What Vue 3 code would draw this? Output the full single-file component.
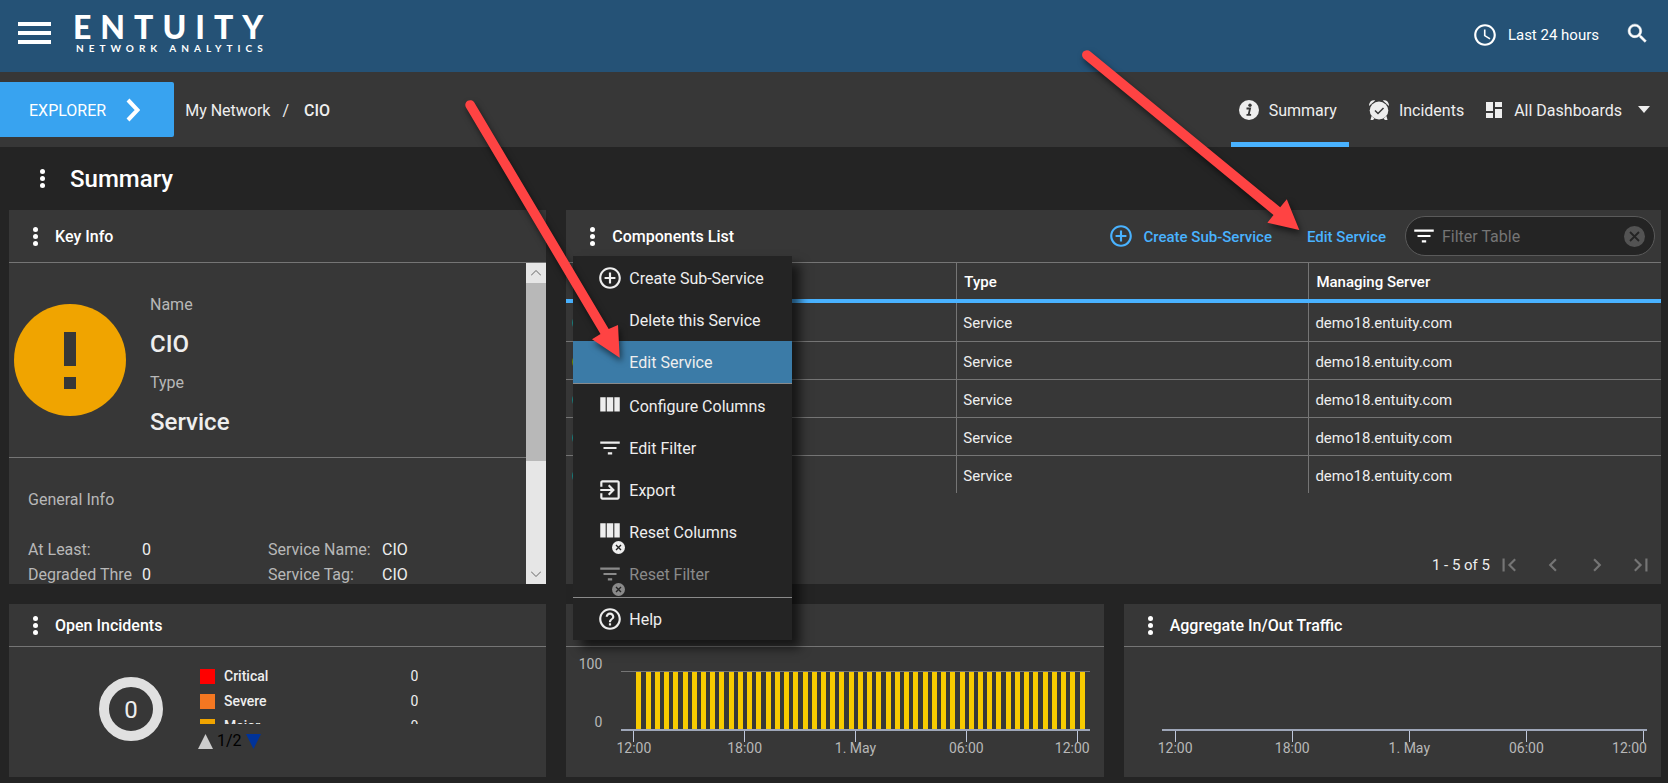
<script setup>
import { ref } from 'vue'

const filterText = ref('')

const rows = [
  { status: 'teal', type: 'Service', server: 'demo18.entuity.com' },
  { status: 'olive', type: 'Service', server: 'demo18.entuity.com' },
  { status: 'teal', type: 'Service', server: 'demo18.entuity.com' },
  { status: 'teal', type: 'Service', server: 'demo18.entuity.com' },
  { status: 'teal', type: 'Service', server: 'demo18.entuity.com' },
]

const menuGroups = [
  [
    { label: 'Create Sub-Service', icon: 'plus' },
    { label: 'Delete this Service' },
    { label: 'Edit Service', active: true },
  ],
  [
    { label: 'Configure Columns', icon: 'columns' },
    { label: 'Edit Filter', icon: 'filter' },
    { label: 'Export', icon: 'export' },
    { label: 'Reset Columns', icon: 'columns', badge: true },
    { label: 'Reset Filter', icon: 'filter', badge: true, disabled: true },
  ],
  [{ label: 'Help', icon: 'help' }],
]

const icons = {
  plus: 'M13 7h-2v4H7v2h4v4h2v-4h4v-2h-4V7zm-1-5C6.480 2 2 6.480 2 12s4.480 10 10 10 10-4.480 10-10S17.520 2 12 2zm0 18c-4.410 0-8-3.590-8-8s3.590-8 8-8 8 3.590 8 8-3.590 8-8 8z',
  columns: 'M3 4h5v13H3zM9 4h6v13H9zM16 4h5v13h-5z',
  filter: 'M10 18h4v-2h-4v2zM3 6v2h18V6H3zm3 7h12v-2H6v2z',
  export: 'M10.090 15.590L11.500 17l5-5-5-5-1.410 1.410L12.670 11H3v2h9.670l-2.580 2.590zM19 3H5c-1.110 0-2 .9-2 2v4h2V5h14v14H5v-4H3v4c0 1.100.89 2 2 2h14c1.100 0 2-.9 2-2V5c0-1.100-.9-2-2-2z',
  help: 'M11 18h2v-2h-2v2zm1-16C6.480 2 2 6.480 2 12s4.480 10 10 10 10-4.480 10-10S17.520 2 12 2zm0 18c-4.410 0-8-3.590-8-8s3.590-8 8-8 8 3.590 8 8-3.590 8-8 8zm0-14c-2.210 0-4 1.790-4 4h2c0-1.100.9-2 2-2s2 .9 2 2c0 2-3 1.750-3 5h2c0-2.250 3-2.500 3-5 0-2.210-1.790-4-4-4z',
}

const pagers = [
  { label: 'First page', d: 'M18.410 16.590L13.820 12l4.590-4.590L17 6l-6 6 6 6zM6 6h2v12H6z' },
  { label: 'Previous page', d: 'M15.410 7.410L14 6l-6 6 6 6 1.410-1.410L10.830 12z' },
  { label: 'Next page', d: 'M10 6L8.590 7.410 13.170 12l-4.580 4.590L10 18l6-6z' },
  { label: 'Last page', d: 'M5.590 7.410L10.180 12l-4.590 4.590L7 18l6-6-6-6zM16 6h2v12h-2z' },
]

const severities = [
  { name: 'Critical', cls: 'critical', count: 0 },
  { name: 'Severe', cls: 'severe', count: 0 },
  { name: 'Major', cls: 'major', count: 0 },
]

const times = ['12:00', '18:00', '1. May', '06:00', '12:00']
const samples = Array.from({ length: 49 }, () => 100)
</script>

<template>
  <div class="page">
    <header class="topbar">
      <button class="burger" aria-label="Menu"><i></i><i></i><i></i></button>
      <div class="logo">
        <span class="logo-name">ENTUITY</span>
        <span class="logo-sub">NETWORK ANALYTICS</span>
      </div>
      <button class="range">
        <svg width="26" height="26" viewBox="0 0 24 24"><path fill="currentColor" d="M11.990 2C6.470 2 2 6.480 2 12s4.470 10 9.990 10C17.520 22 22 17.520 22 12S17.520 2 11.990 2zM12 20c-4.420 0-8-3.580-8-8s3.580-8 8-8 8 3.580 8 8-3.580 8-8 8zm.5-13H11v6l5.250 3.150.75-1.230-4.500-2.670z" /></svg>
        Last 24 hours
      </button>
      <button class="search" aria-label="Search">
        <svg width="25" height="25" viewBox="0 0 24 24"><path fill="currentColor" stroke="currentColor" stroke-width=".5" d="M15.500 14h-.79l-.28-.27C15.410 12.590 16 11.110 16 9.500 16 5.910 13.090 3 9.500 3S3 5.910 3 9.500 5.910 16 9.500 16c1.610 0 3.090-.59 4.230-1.570l.27.28v.79l5 4.990L20.490 19l-4.990-5zm-6 0C7.010 14 5 11.990 5 9.500S7.010 5 9.500 5 14 7.010 14 9.500 11.990 14 9.500 14z" /></svg>
      </button>
    </header>

    <div class="subbar">
      <button class="explorer">
        <span class="label">EXPLORER</span>
        <svg width="14" height="24" viewBox="0 0 14 24"><path d="M2 2l9.500 10L2 22" fill="none" stroke="currentColor" stroke-width="4" /></svg>
      </button>
      <nav class="crumbs label" aria-label="Breadcrumb">
        <a href="#">My Network</a><span>/</span><strong>CIO</strong>
      </nav>
      <nav class="tabs" aria-label="Views">
        <a href="#" class="tab current">
          <svg width="20" height="20" viewBox="0 0 20 20"><circle cx="10" cy="10" r="10" fill="#eee" /><circle cx="11" cy="5.200" r="1.700" fill="#373737" /><path d="M7.500 8.500h3.600l-1.500 6.200h1.600M7.500 14.900h4.600" fill="none" stroke="#373737" stroke-width="1.800" /></svg>
          <span class="label">Summary</span>
        </a>
        <a href="#" class="tab incidents">
          <svg width="20" height="20" viewBox="0 0 20 20"><g fill="#eee"><ellipse cx="10" cy="10.500" rx="9.300" ry="9" /><path d="M0 6C-.3 2 3 -.7 6.200.4zM20 6C20.300 2 17-.7 13.800.4zM2.500 16l3 2.500-1.500 1.500H1.500zM17.500 16l-3 2.500 1.500 1.500h2.500z" /></g><path d="M6 10.500l3 3 5.500-5.500" fill="none" stroke="#373737" stroke-width="1.500" /></svg>
          <span class="label">Incidents</span>
        </a>
        <button class="tab dashboards">
          <svg width="16" height="16" viewBox="0 0 16 16"><path fill="#eee" d="M0 0h7v9H0zM0 11h7v5H0zM9 0h7v5H9zM9 7h7v9H9z" /></svg>
          <span class="label">All Dashboards</span>
          <svg class="caret" width="12" height="7" viewBox="0 0 12 7"><path fill="#eee" d="M0 0h12L6 7z" /></svg>
        </button>
      </nav>
    </div>

    <div class="heading">
      <button class="dots" aria-label="Dashboard options"><i></i><i></i><i></i></button>
      <h1>Summary</h1>
    </div>

    <main class="board">
      <section class="panel keyinfo">
        <div class="panel-head tall">
          <button class="dots" aria-label="Key Info options"><i></i><i></i><i></i></button>
          <h2 class="label">Key Info</h2>
        </div>
        <div class="scroller">
          <div class="scroll-content">
            <div class="identity">
              <svg width="112" height="112" viewBox="0 0 112 112"><circle cx="56" cy="56" r="56" fill="#f0a400" /><path fill="#373737" d="M50 28h12v34H50zM50 73h12v12H50z" /></svg>
              <dl>
                <dt>Name</dt><dd>CIO</dd>
                <dt>Type</dt><dd>Service</dd>
              </dl>
            </div>
            <div class="general">
              <h3>General Info</h3>
              <dl>
                <dt>At Least:</dt><dd>0</dd><dt>Service Name:</dt><dd>CIO</dd>
                <dt>Degraded Thre</dt><dd>0</dd><dt>Service Tag:</dt><dd>CIO</dd>
              </dl>
            </div>
          </div>
          <div class="scrollbar" aria-hidden="true">
            <span class="arrow"><svg width="10" height="6" viewBox="0 0 10 6"><path d="M0 5.500l5-5 5 5" fill="none" stroke="#666" /></svg></span>
            <span class="thumb"></span>
            <span class="track"></span>
            <span class="arrow"><svg width="10" height="6" viewBox="0 0 10 6"><path d="M0 .5l5 5 5-5" fill="none" stroke="#666" /></svg></span>
          </div>
        </div>
      </section>

      <section class="panel components">
        <div class="panel-head tall">
          <button class="dots" aria-label="Components List options" aria-expanded="true"><i></i><i></i><i></i></button>
          <h2 class="label">Components List</h2>
          <button class="action create">
            <svg width="26" height="26" viewBox="0 0 24 24"><path fill="currentColor" :d="icons.plus" /></svg>
            <span class="label">Create Sub-Service</span>
          </button>
          <button class="action label">Edit Service</button>
          <div class="filter">
            <svg width="26" height="26" viewBox="0 0 24 24"><path fill="#fff" :d="icons.filter" /></svg>
            <input v-model="filterText" class="label" type="text" placeholder="Filter Table" aria-label="Filter Table" />
            <button aria-label="Clear filter">
              <svg width="21" height="21" viewBox="0 0 21 21"><circle cx="10.500" cy="10.500" r="10.500" fill="#535353" /><path d="M6 6l9 9M15 6l-9 9" stroke="#242424" stroke-width="1.800" /></svg>
            </button>
          </div>
          <div class="menu" role="menu">
            <div v-for="(group, g) in menuGroups" :key="g" class="menu-group">
              <button v-for="item in group" :key="item.label" role="menuitem" :disabled="item.disabled" :class="{ active: item.active }">
                <span class="menu-icon">
                  <svg v-if="item.icon" width="26" height="26" viewBox="0 0 24 24"><path fill="currentColor" :d="icons[item.icon]" /></svg>
                  <svg v-if="item.badge" class="badge" width="13" height="13" viewBox="0 0 13 13"><circle cx="6.500" cy="6.500" r="6.500" fill="currentColor" /><path d="M4 4l5 5M9 4L4 9" stroke="#242424" stroke-width="1.400" /></svg>
                </span>
                <span class="label">{{ item.label }}</span>
              </button>
            </div>
          </div>
        </div>
        <table>
          <thead>
            <tr><th></th><th>Type</th><th>Managing Server</th></tr>
          </thead>
          <tbody>
            <tr v-for="(row, i) in rows" :key="i">
              <td><span class="status" :class="row.status"></span></td>
              <td>{{ row.type }}</td>
              <td>{{ row.server }}</td>
            </tr>
          </tbody>
        </table>
        <div class="pager">
          <span>1 - 5 of 5</span>
          <button v-for="p in pagers" :key="p.label" :aria-label="p.label" disabled>
            <svg width="26" height="26" viewBox="0 0 24 24"><path fill="currentColor" :d="p.d" /></svg>
          </button>
        </div>
      </section>

      <section class="panel incidents-panel">
        <div class="panel-head">
          <button class="dots" aria-label="Open Incidents options"><i></i><i></i><i></i></button>
          <h2 class="label">Open Incidents</h2>
        </div>
        <div class="incident-body">
          <div class="donut">0</div>
          <div class="legend">
            <ul>
              <li v-for="s in severities" :key="s.name">
                <i :class="s.cls"></i><b>{{ s.name }}</b><span>{{ s.count }}</span>
              </li>
            </ul>
            <div class="legend-nav">
              <button aria-label="Previous"><svg width="15" height="15" viewBox="0 0 15 15"><path fill="#ccc" d="M0 15L7.500 0 15 15z" /></svg></button>
              1/2
              <button aria-label="Next"><svg width="15" height="15" viewBox="0 0 15 15"><path fill="#039" d="M0 0h15L7.500 15z" /></svg></button>
            </div>
          </div>
        </div>
      </section>

      <section class="panel">
        <div class="panel-head"></div>
        <div class="chart health">
          <div class="y-axis"><span>100</span><span>0</span></div>
          <div class="plot">
            <div class="bars"><i v-for="(s, i) in samples" :key="i" :style="{ height: s + '%' }"></i></div>
            <ul class="x-axis"><li v-for="(t, i) in times" :key="i"><span>{{ t }}</span></li></ul>
          </div>
        </div>
      </section>

      <section class="panel">
        <div class="panel-head">
          <button class="dots" aria-label="Aggregate In/Out Traffic options"><i></i><i></i><i></i></button>
          <h2 class="label">Aggregate In/Out Traffic</h2>
        </div>
        <div class="chart traffic">
          <div class="plot">
            <div class="bars"></div>
            <ul class="x-axis"><li v-for="(t, i) in times" :key="i"><span>{{ t }}</span></li></ul>
          </div>
        </div>
      </section>
    </main>

    <svg class="pointers" width="1320" height="380" viewBox="0 0 1320 380" aria-hidden="true">
      <g fill="#ff4343" stroke="none">
        <path d="M466 107.500A4.800 4.800 0 0 1 474.300 102.500L608.700 329 618 325 619.700 357.700 592 339.300 600.500 334z" />
        <path d="M1083.500 58.500A4.800 4.800 0 0 1 1090.300 51.500L1280.200 207.300 1286.800 199.300 1299.300 230 1267.400 222.700 1273.500 215z" />
      </g>
    </svg>
  </div>
</template>

<style>
body {
  margin: 0;
  background: #242424;
}
</style>

<style scoped>
.page {
  position: relative;
  display: flex;
  flex-direction: column;
  height: 100vh;
  min-height: 760px;
  box-sizing: border-box;
  overflow: hidden;
  background: #242424;
  color: #eee;
  font: 400 16px/24px Roboto, sans-serif;
}
button {
  margin: 0;
  padding: 0;
  border: 0;
  background: none;
  color: inherit;
  font: inherit;
}
svg { display: block; flex: none; }
a { color: inherit; text-decoration: none; }
h1, h2, h3, dl, dd, ul { margin: 0; padding: 0; }
ul { list-style: none; }
.label { padding-top: 2px; }

.topbar {
  display: flex;
  align-items: center;
  flex: none;
  height: 72px;
  box-sizing: border-box;
  padding: 0 18px 6px 18px;
  background: #255276;
  color: #fff;
}
.burger {
  display: flex;
  flex-direction: column;
  gap: 5px;
  width: 33px;
}
.burger i { height: 4px; background: #fff; }
.logo {
  display: flex;
  flex-direction: column;
  margin-left: 22px;
}
.logo-name { font: 900 32px/30px Lato, sans-serif; letter-spacing: 9px; }
.logo-sub { padding-left: 3px; font: 700 10px/12px Lato, sans-serif; letter-spacing: 5px; }
.range {
  display: flex;
  align-items: center;
  gap: 10px;
  margin-left: auto;
  font-size: 15px;
  padding-top: 4px;
}
.search { margin-left: 26px; }

.subbar {
  display: flex;
  align-items: center;
  flex: none;
  height: 75px;
  background: #373737;
}
.explorer {
  display: flex;
  align-items: center;
  gap: 20px;
  height: 55px;
  padding: 0 34px 0 29px;
  border-radius: 0 2px 2px 0;
  background: #38a3f0;
  color: #fff;
}
.crumbs { display: flex; gap: 12px; margin-left: 11px; }
.crumbs strong { margin-left: 3px; font-weight: 500; }
.tabs { display: flex; align-self: stretch; margin-left: auto; padding-right: 18px; }
.tab {
  display: flex;
  align-items: center;
  gap: 10px;
  box-sizing: border-box;
  border-top: 5px solid transparent;
  border-bottom: 5px solid transparent;
}
.current { padding: 0 12px 0 8px; border-bottom-color: #49b2ff; }
.incidents { padding-left: 20px; }
.dashboards { gap: 12px; padding-left: 22px; }
.caret { margin-left: 4px; }

.dots {
  display: flex;
  flex-direction: column;
  gap: 2px;
  width: 5px;
}
.dots i { width: 5px; height: 5px; border-radius: 50%; background: #fff; }

.heading {
  display: flex;
  align-items: center;
  gap: 25px;
  flex: none;
  height: 63px;
  padding-left: 40px;
}
h1 { color: #fff; font-size: 24px; font-weight: 500; }

.board {
  display: grid;
  flex: 1;
  grid-template-columns: repeat(3, minmax(0, 1fr));
  grid-template-rows: minmax(0, 374fr) minmax(0, 173fr);
  gap: 20px;
  min-height: 0;
  padding: 0 7px 6px 9px;
}
.panel {
  display: flex;
  flex-direction: column;
  min-width: 0;
  min-height: 0;
  background: #373737;
}
.panel-head {
  position: relative;
  display: flex;
  align-items: center;
  flex: none;
  height: 43px;
  box-sizing: border-box;
  padding-left: 24px;
  border-bottom: 1px solid #757575;
}
.tall { height: 53px; }
h2 { margin-left: 17px; color: #fff; font-size: 16px; font-weight: 500; }

.scroller { display: flex; flex: 1; min-height: 0; overflow: hidden; }
.scroll-content { flex: 1; color: #b8b8b8; }
.identity {
  display: flex;
  align-items: center;
  gap: 24px;
  height: 195px;
  box-sizing: border-box;
  padding-left: 5px;
  border-bottom: 1px solid #757575;
}
.identity dl { padding-top: 8px; }
.identity dd { margin: 13px 0; color: #eee; font-size: 24px; font-weight: 500; line-height: 28px; }
.identity dd:last-child { margin-bottom: 0; }
.general { padding: 30px 19px 0; }
h3 { font-size: 16px; font-weight: 400; }
.general dl {
  display: grid;
  grid-template-columns: 106px 118px 106px 1fr;
  column-gap: 8px;
  margin-top: 25px;
  line-height: 25px;
  white-space: nowrap;
}
.general dd { color: #eee; }
.scrollbar { display: flex; flex-direction: column; width: 20px; background: #e6e6e6; }
.arrow { display: flex; align-items: center; justify-content: center; height: 20px; }
.thumb { flex: 178; background: #b8b8b8; }
.track { flex: 103; }

.components { grid-column: span 2; }
.action { color: #49b2ff; font-size: 15px; font-weight: 500; }
.create { display: flex; align-items: center; gap: 10px; margin: 0 35px 0 auto; }
.filter {
  display: flex;
  align-items: center;
  gap: 5px;
  width: 250px;
  height: 40px;
  box-sizing: border-box;
  margin: 0 6px 0 19px;
  padding: 0 9px 0 5px;
  border: 1px solid #5a5a5a;
  border-radius: 20px;
  background: #242424;
}
.filter input {
  flex: 1;
  min-width: 0;
  padding-right: 0;
  padding-bottom: 0;
  padding-left: 0;
  border: 0;
  outline: 0;
  background: none;
  color: #eee;
  font: inherit;
}
.filter input::placeholder { color: #757575; opacity: 1; }

.menu {
  position: absolute;
  top: 46px;
  left: 7px;
  z-index: 2;
  width: 219px;
  background: #242424;
  box-shadow: 8px 8px 10px rgba(0, 0, 0, 0.6);
}
.menu-group { padding: 1px 0 2px; border-top: 1px solid #8a8a8a; }
.menu-group:first-child { padding: 1px 0 0; border-top: 0; }
.menu-group:last-child { padding: 0; }
.menu button {
  display: flex;
  align-items: center;
  gap: 6px;
  width: 100%;
  height: 42px;
  padding-left: 24px;
  color: #eee;
  white-space: nowrap;
}
.menu button.active { background: #3b7ba7; }
.menu button:disabled { color: #8a8a8a; }
.menu-icon { position: relative; width: 26px; height: 26px; }
.badge { position: absolute; top: 22px; left: 15px; }

table { width: 100%; border-collapse: collapse; table-layout: fixed; font-size: 15px; text-align: left; }
th, td { height: 35px; padding: 2px 0 0 6px; border-left: 1px solid #757575; }
th:first-child, td:first-child { width: 384px; border-left: 0; padding-left: 6px; }
th { height: 34px; padding-left: 7px; font-weight: 500; color: #fff; border-bottom: 4px solid #49b2ff; }
tbody tr:first-child td { height: 36px; }
tbody tr + tr td { border-top: 1px solid #757575; }
.status { display: block; width: 16px; height: 16px; border-radius: 50%; }
.teal { background: #17807e; }
.olive { background: #6c8a00; }
.pager {
  display: flex;
  align-items: center;
  justify-content: flex-end;
  gap: 18px;
  margin-top: auto;
  padding: 0 7px 6px 0;
  font-size: 15px;
}
.pager span { margin-right: -12px; }
.pager button { color: #757575; }

.incident-body { display: flex; align-items: center; flex: 1; min-height: 0; padding: 0 128px 7px 90px; }
.donut {
  width: 44px;
  height: 44px;
  border: 10px solid #e0e0e0;
  border-radius: 50%;
  font-size: 24px;
  line-height: 46px;
  text-align: center;
}
.legend { flex: 1; margin-left: 37px; }
.legend ul { height: 60px; overflow: hidden; }
.legend li { display: flex; align-items: center; gap: 9px; height: 25px; font-size: 14px; line-height: 25px; }
.legend li i { width: 15px; height: 15px; }
.legend b { flex: 1; font-weight: 500; }
.critical { background: #f00; }
.severe { background: #f47721; }
.major { background: #f0a400; }
.legend-nav { display: flex; align-items: center; gap: 4px; margin-left: -2px; padding-top: 5px; color: #000; }

.chart { display: flex; flex: 1; min-height: 0; color: #b8b8b8; font-size: 14px; line-height: 16px; }
.health { padding: 24px 14px 0 12px; }
.traffic { padding: 24px 14px 0 38px; }
.y-axis {
  display: flex;
  flex-direction: column;
  justify-content: space-between;
  width: 24px;
  height: 74px;
  margin: -15px 19px 0 0;
  text-align: right;
}
.plot { flex: 1; min-width: 0; }
.bars {
  display: flex;
  align-items: flex-end;
  justify-content: space-between;
  height: 57px;
  padding: 0 5px 0 15px;
  border-top: 1px solid #757575;
  border-bottom: 2px solid #9ea6b8;
}
.traffic .bars { border-top-color: transparent; }
.bars i { width: 5px; background: #f7ca00; }
.x-axis { display: flex; justify-content: space-between; padding: 0 12px; line-height: 12px; }
.traffic .x-axis { padding: 0 3px 0 13px; }
.x-axis li { display: flex; flex-direction: column; align-items: center; width: 1px; white-space: nowrap; }
.x-axis li::before { width: 1px; height: 11px; background: #c0c8dc; content: ""; }
.x-axis li:last-child span { align-self: flex-end; margin-right: -12px; }
.traffic .x-axis li:last-child span { margin-right: -3px; }

.pointers {
  position: absolute;
  top: 0;
  left: 0;
  z-index: 3;
  pointer-events: none;
  filter: drop-shadow(2px 4px 3px rgba(0, 0, 0, 0.55));
}
</style>
